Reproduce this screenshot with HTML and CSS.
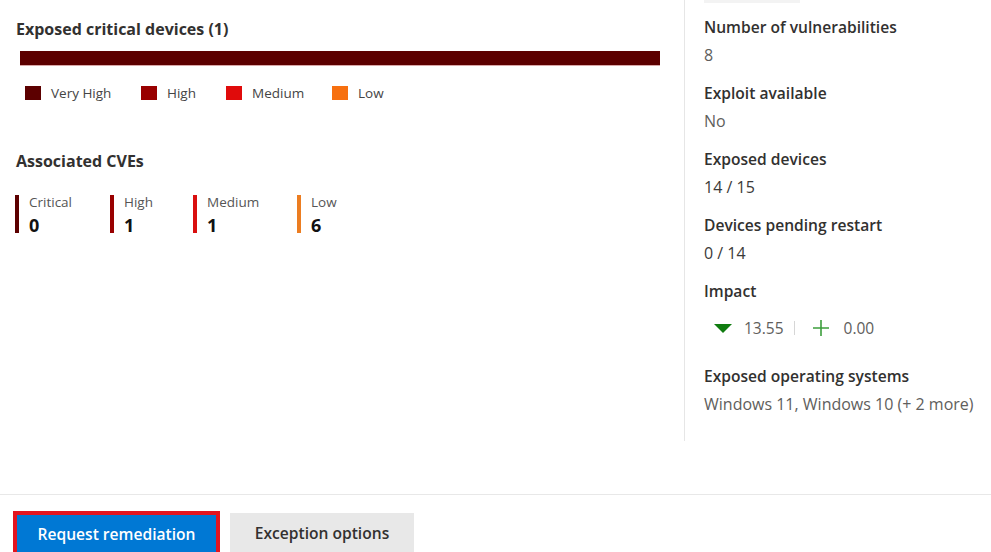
FILE: index.html
```html
<!DOCTYPE html>
<html>
<head>
<meta charset="utf-8">
<link rel="stylesheet" href="styles.css">
</head>
<body>
<div class="page">
  <div class="main">
    <section class="left">
      <h2 class="title">Exposed critical devices (1)</h2>
      <div class="bar"></div>
      <ul class="legend">
        <li><span class="sq c-vhigh"></span>Very High</li>
        <li><span class="sq c-high"></span>High</li>
        <li><span class="sq c-med"></span>Medium</li>
        <li><span class="sq c-low"></span>Low</li>
      </ul>
      <h2 class="title cves-title">Associated CVEs</h2>
      <div class="cves">
        <div class="cve b-crit"><div class="cve-label">Critical</div><div class="cve-val">0</div></div>
        <div class="cve b-high"><div class="cve-label">High</div><div class="cve-val">1</div></div>
        <div class="cve b-med"><div class="cve-label">Medium</div><div class="cve-val">1</div></div>
        <div class="cve b-low"><div class="cve-label">Low</div><div class="cve-val">6</div></div>
      </div>
    </section>
    <aside class="side">
      <div class="remnant"></div>
      <div class="field">
        <div class="f-label">Number of vulnerabilities</div>
        <div class="f-val">8</div>
      </div>
      <div class="field">
        <div class="f-label">Exploit available</div>
        <div class="f-val">No</div>
      </div>
      <div class="field">
        <div class="f-label">Exposed devices</div>
        <div class="f-val dark">14 / 15</div>
      </div>
      <div class="field">
        <div class="f-label">Devices pending restart</div>
        <div class="f-val dark">0 / 14</div>
      </div>
      <div class="field impact-field">
        <div class="f-label">Impact</div>
        <div class="impact">
          <svg class="tri" width="20" height="10" viewBox="0 0 20 10"><path d="M1 0 H19 L10 9 Z" fill="#107c10"/></svg>
          <span class="num">13.55</span>
          <span class="sep"></span>
          <svg class="plus" width="18" height="18" viewBox="0 0 18 18"><path d="M9 1 V17 M1 9 H17" stroke="#3c9e3c" stroke-width="1.6" fill="none"/></svg>
          <span class="num">0.00</span>
        </div>
      </div>
      <div class="field">
        <div class="f-label">Exposed operating systems</div>
        <div class="f-val">Windows 11, Windows 10 (+ 2 more)</div>
      </div>
    </aside>
  </div>
  <footer class="footer">
    <div class="highlight"><button class="btn primary">Request remediation</button></div>
    <button class="btn secondary">Exception options</button>
  </footer>
</div>
</body>
</html>
```

FILE: styles.css
```css
* { box-sizing: border-box; }
html, body { margin: 0; padding: 0; background: #fff; }
body {
  font-family: "Open Sans", "Noto Sans", sans-serif;
  color: #323130;
  width: 991px;
  height: 552px;
  overflow: hidden;
}
.page { display: flex; flex-direction: column; }
.main { display: flex; height: 441px; }
.left { width: 684px; padding: 16px 0 0 16px; }
.title {
  margin: 0;
  font-size: 16px;
  font-weight: 700;
  line-height: 26px;
  color: #323130;
}
.bar {
  margin: 9px 0 0 4px;
  width: 640px;
  height: 15px;
  background: #5c0000;
  border-bottom: 1px solid #d9a8a8;
}
.legend {
  list-style: none;
  margin: 19px 0 0 9px;
  padding: 0;
  display: flex;
  font-size: 13.5px;
  color: #444;
}
.legend li { display: flex; align-items: center; line-height: 16px; }
.legend li:nth-child(1) { width: 116px; }
.legend li:nth-child(2) { width: 85px; }
.legend li:nth-child(3) { width: 106px; }
.sq { display: inline-block; width: 16px; height: 14px; margin-right: 10px; }
.c-vhigh { background: #5c0000; }
.c-high { background: #990000; }
.c-med { background: #e00b0b; }
.c-low { background: #f7700f; }
.cves-title { margin-top: 47px; }
.cves { display: flex; margin: 21px 0 0 -1px; }
.cve { border-left: 4px solid; padding-left: 10px; height: 38px; }
.cve:nth-child(1) { width: 95px; }
.cve:nth-child(2) { width: 83px; }
.cve:nth-child(3) { width: 104px; }
.b-crit { border-color: #5c0000; }
.b-high { border-color: #990000; }
.b-med { border-color: #d90f0f; }
.b-low { border-color: #ec7d21; }
.cve-label { font-size: 13.5px; line-height: 16px; color: #555; margin-top: -1px; }
.cve-val { font-size: 18px; font-weight: 700; line-height: 24px; color: #111; margin-top: 3px; }
.side {
  flex: 1;
  border-left: 1px solid #e6e6e6;
  padding-left: 19px;
}
.remnant { width: 96px; height: 3px; background: #f3f3f3; margin-bottom: 10px; }
.field { margin-bottom: 10px; }
.f-label { font-size: 15.6px; font-weight: 600; line-height: 28px; color: #323130; }
.f-val { font-size: 16px; line-height: 28px; color: #605e5c; }
.f-val.dark { color: #3b3a39; }
.impact-field { margin-bottom: 18px; }
.impact { display: flex; align-items: center; height: 32px; margin-top: 7px; padding-left: 10px; font-size: 15.5px; color: #605e5c; }
.tri { margin: 2px 11px 0 -1px; }
.sep { width: 1px; height: 14px; background: #d6d6d6; margin: 0 17px 0 10px; }
.plus { margin-right: 14px; }
.footer {
  margin-top: 53px;
  border-top: 1px solid #e8e8e8;
  padding: 16px 0 0 13px;
  display: flex;
  align-items: flex-start;
  gap: 10px;
}
.highlight { border: 4px solid #e3141f; }
.btn {
  font-family: "Open Sans", "Noto Sans", sans-serif;
  font-size: 15.6px;
  font-weight: 600;
  border: none;
  height: 40px;
  padding: 0 0 2px;
  display: block;
}
.primary { width: 199px; background: #0078d4; color: #fff; }
.secondary { width: 184px; height: 42px; margin-top: 2px; background: #e8e8e8; color: #323130; }
```
